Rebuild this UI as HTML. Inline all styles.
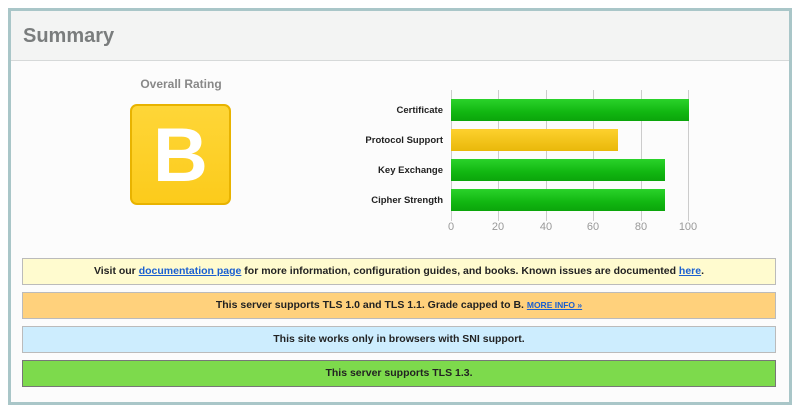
<!DOCTYPE html><html><head><style>
body{margin:0;background:#fff;font-family:"Liberation Sans",Arial,sans-serif;}
.outer{position:absolute;left:8px;top:8px;width:778px;height:391px;border:3px solid #a9c6c8;background:#fcfcfc;}
.hdr{position:absolute;left:0;top:0;width:778px;height:49px;background:#f3f4f3;border-bottom:1px solid #d6d9d9;}
.hdr h1{margin:0;position:absolute;left:12px;top:14px;font-size:20px;color:#7a7d7d;font-weight:bold;}
.ov{position:absolute;left:120px;top:77px;width:122px;text-align:center;font-size:12px;font-weight:bold;color:#888;}
.grade{position:absolute;left:130px;top:104px;width:97px;height:97px;background:linear-gradient(#fed638,#fccb1b);border:2px solid #e8b300;border-radius:7px;color:#fff;font-weight:bold;font-size:76px;text-align:center;line-height:100px;}
.lbl{position:absolute;width:200px;left:243px;text-align:right;font-size:9.5px;font-weight:bold;color:#222;}
.grid{position:absolute;top:90px;height:131px;width:1px;background:#ccc;}
.bar{position:absolute;left:451px;height:22px;}
.g{background:linear-gradient(#2ad22a,#11b711 60%,#0ba50b);}
.y{background:linear-gradient(#fdd12e,#e9b80a);}
.ax{position:absolute;top:221px;font-size:11px;color:#999;width:30px;text-align:center;}
.box{position:absolute;left:22px;width:752px;height:25px;border:1px solid #bbb;text-align:center;font-size:10.5px;font-weight:bold;color:#222;line-height:25px;}
a{color:#1a5fd0;text-decoration:underline;}
</style></head><body>
<div class="outer"><div class="hdr"><h1>Summary</h1></div></div>
<div class="ov">Overall Rating</div>
<div class="grade">B</div>
<div class="grid" style="left:451px"></div><div class="grid" style="left:498px"></div><div class="grid" style="left:546px"></div><div class="grid" style="left:593px"></div><div class="grid" style="left:641px"></div><div class="grid" style="left:688px"></div>
<div class="lbl" style="top:105px">Certificate</div>
<div class="lbl" style="top:135px">Protocol Support</div>
<div class="lbl" style="top:165px">Key Exchange</div>
<div class="lbl" style="top:195px">Cipher Strength</div>
<div class="bar g" style="top:99px;width:238px"></div>
<div class="bar y" style="top:129px;width:167px"></div>
<div class="bar g" style="top:159px;width:214px"></div>
<div class="bar g" style="top:189px;width:214px"></div>
<div class="ax" style="left:436px">0</div><div class="ax" style="left:483px">20</div><div class="ax" style="left:531px">40</div><div class="ax" style="left:578px">60</div><div class="ax" style="left:626px">80</div><div class="ax" style="left:673px">100</div>
<div class="box" style="top:258px;background:#fffbcf">Visit our <a>documentation page</a> for more information, configuration guides, and books. Known issues are documented <a>here</a>.</div>
<div class="box" style="top:292px;background:#ffd17c">This server supports TLS 1.0 and TLS 1.1. Grade capped to B. <a style="font-size:8.5px">MORE INFO »</a></div>
<div class="box" style="top:326px;background:#cdedfe">This site works only in browsers with SNI support.</div>
<div class="box" style="top:360px;background:#7dda4c;border-color:#777">This server supports TLS 1.3.</div>
</body></html>
